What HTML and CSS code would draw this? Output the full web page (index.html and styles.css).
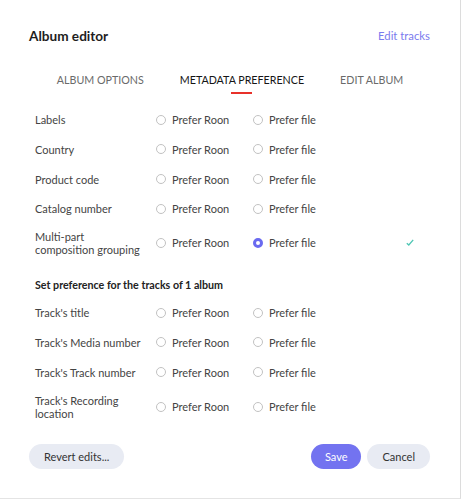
FILE: index.html
```html
<!DOCTYPE html>
<html>
<head>
<meta charset="utf-8">
<link rel="stylesheet" href="styles.css">
</head>
<body>
<div class="dialog">
  <div class="header">
    <div class="title">Album editor</div>
    <a class="edit-tracks">Edit tracks</a>
  </div>
  <div class="tabs">
    <div class="tab">ALBUM OPTIONS</div>
    <div class="tab active">METADATA PREFERENCE</div>
    <div class="tab">EDIT ALBUM</div>
  </div>
  <div class="grid">
    <div class="row"><div class="label">Labels</div><div class="opt"><span class="radio"></span>Prefer Roon</div><div class="opt"><span class="radio"></span>Prefer file</div><div class="state"></div></div>
    <div class="row"><div class="label">Country</div><div class="opt"><span class="radio"></span>Prefer Roon</div><div class="opt"><span class="radio"></span>Prefer file</div><div class="state"></div></div>
    <div class="row"><div class="label">Product code</div><div class="opt"><span class="radio"></span>Prefer Roon</div><div class="opt"><span class="radio"></span>Prefer file</div><div class="state"></div></div>
    <div class="row"><div class="label">Catalog number</div><div class="opt"><span class="radio"></span>Prefer Roon</div><div class="opt"><span class="radio"></span>Prefer file</div><div class="state"></div></div>
    <div class="row tall"><div class="label">Multi-part composition grouping</div><div class="opt"><span class="radio"></span>Prefer Roon</div><div class="opt"><span class="radio checked"></span>Prefer file</div><div class="state"><svg class="check" width="8" height="7" viewBox="0 0 8 7"><polyline points="0.8,4.2 2.8,6 7.2,0.8" fill="none" stroke="#4ec6b4" stroke-width="1.3"/></svg></div></div>
    <div class="section">Set preference for the tracks of 1 album</div>
    <div class="row"><div class="label">Track's title</div><div class="opt"><span class="radio"></span>Prefer Roon</div><div class="opt"><span class="radio"></span>Prefer file</div><div class="state"></div></div>
    <div class="row"><div class="label">Track's Media number</div><div class="opt"><span class="radio"></span>Prefer Roon</div><div class="opt"><span class="radio"></span>Prefer file</div><div class="state"></div></div>
    <div class="row"><div class="label">Track's Track number</div><div class="opt"><span class="radio"></span>Prefer Roon</div><div class="opt"><span class="radio"></span>Prefer file</div><div class="state"></div></div>
    <div class="row tall last"><div class="label">Track's Recording location</div><div class="opt"><span class="radio"></span>Prefer Roon</div><div class="opt"><span class="radio"></span>Prefer file</div><div class="state"></div></div>
  </div>
  <div class="footer">
    <button class="btn">Revert edits...</button>
    <div class="spacer"></div>
    <button class="btn primary">Save</button>
    <button class="btn">Cancel</button>
  </div>
</div>
</body>
</html>
```
FILE: styles.css
```css
html, body {
  margin: 0;
  padding: 0;
  background: #fff;
}
body {
  font-family: Lato, "Open Sans", sans-serif;
  color: #333;
}
.dialog {
  width: 461px;
  height: 499px;
  box-sizing: border-box;
  border-right: 1px solid #dcdcdc;
  border-bottom: 1px solid #e4e4e4;
  display: flex;
  flex-direction: column;
}
.header {
  display: flex;
  align-items: center;
  justify-content: space-between;
  padding: 26px 30px 0 29px;
  height: 20px;
}
.title {
  font-size: 13.6px;
  font-weight: 700;
  color: #1e1e1e;
  line-height: 20px;
}
.edit-tracks {
  font-size: 11.3px;
  color: #7b7bee;
  line-height: 20px;
}
.tabs {
  display: flex;
  justify-content: center;
  gap: 36px;
  margin-top: 26px;
}
.tab {
  font-size: 10.7px;
  line-height: 16px;
  color: #6a6a6a;
  position: relative;
  padding-bottom: 6px;
}
.tab.active {
  color: #151515;
}
.tab.active::after {
  content: "";
  position: absolute;
  left: 50%;
  margin-left: -11px;
  width: 21px;
  height: 2px;
  bottom: 0;
  background: #e8312a;
}
.grid {
  margin-top: 11px;
  padding-left: 35px;
  display: flex;
  flex-direction: column;
}
.row {
  display: grid;
  grid-template-columns: 121px 97px 1fr 54px;
  align-items: center;
  height: 29.67px;
  font-size: 11px;
}
.row.tall {
  height: 38.3px;
}
.row.last {
  height: 40px;
}
.label {
  line-height: 13px;
  color: #444;
  max-width: 106px;
}
.opt {
  display: flex;
  align-items: center;
  color: #444;
}
.radio {
  width: 10px;
  height: 10px;
  box-sizing: border-box;
  border: 1px solid #c2c2c2;
  border-radius: 50%;
  margin-right: 6px;
  background: #fff;
  display: inline-block;
}
.radio.checked {
  border: 3px solid #6a6af0;
  background: #fff;
}
.state {
  display: flex;
  align-items: center;
}
.check {
  display: block;
}
.section {
  font-size: 10.7px;
  font-weight: 700;
  color: #222;
  height: 36px;
  line-height: 16px;
  padding-top: 15px;
  box-sizing: border-box;
}
.footer {
  display: flex;
  align-items: center;
  padding: 0 30px 0 29px;
  margin-top: 17px;
  gap: 6px;
}
.spacer {
  flex: 1;
}
.btn {
  font-family: Lato, "Open Sans", sans-serif;
  font-size: 11px;
  color: #333;
  background: #e8ebf3;
  border: none;
  border-radius: 13px;
  height: 25px;
  padding: 0 15px;
}
.btn.primary {
  background: #7373f0;
  color: #fff;
  padding: 0 14px;
}
```
